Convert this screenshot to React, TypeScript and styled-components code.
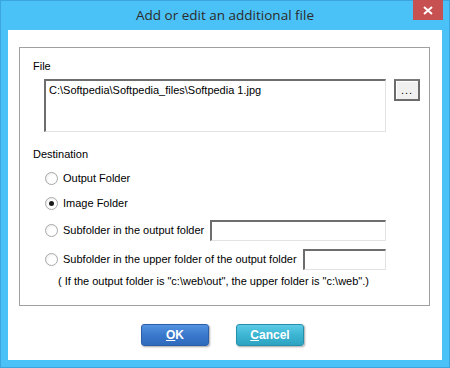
import React from "react";
import styled, { createGlobalStyle } from "styled-components";

const GlobalStyle = createGlobalStyle`
  html, body {
    margin: 0;
    padding: 0;
    background: #4bc2f7;
  }
  body {
    font-family: "Liberation Sans", Arial, sans-serif;
    font-size: 11px;
    color: #000;
  }
`;

const Window = styled.div`
  width: 450px;
  height: 368px;
  box-sizing: border-box;
  background: #4bc2f7;
  border: 1px solid #3aa6dd;
  display: flex;
  flex-direction: column;
`;

const TitleBar = styled.div`
  height: 29px;
  position: relative;
  display: flex;
  align-items: center;
  justify-content: center;
  padding-bottom: 1px;
  box-sizing: border-box;
  font-family: "Open Sans", "Liberation Sans", sans-serif;
  font-size: 13.5px;
  color: #2b2b2b;
`;

const CloseButton = styled.div`
  position: absolute;
  top: -1px;
  right: 6px;
  width: 30px;
  height: 20px;
  background: #c75050;
  display: flex;
  align-items: center;
  justify-content: center;
`;

const Client = styled.div`
  flex: 1;
  margin: 0 7px 7px 7px;
  background: #fff;
  display: flex;
  flex-direction: column;
`;

const Panel = styled.div`
  margin: 17px 0 0 11px;
  width: 411px;
  height: 259px;
  box-sizing: border-box;
  border: 1px solid #a0a0a0;
  padding: 11px 0 0 13px;
  display: flex;
  flex-direction: column;
`;

const Label = styled.div<{ $top?: number }>`
  margin-top: ${(p) => p.$top ?? 0}px;
  height: 14px;
  line-height: 14px;
`;

const FileRow = styled.div`
  display: flex;
  align-items: flex-start;
  gap: 8px;
  margin: 6px 0 0 11px;
`;

const PathBox = styled.div`
  width: 342px;
  height: 53px;
  box-sizing: border-box;
  border-style: solid;
  border-width: 2px 1px 1px 2px;
  border-color: #6d6d6d #e3e3e3 #e3e3e3 #6d6d6d;
  padding: 2px 3px;
  line-height: 14px;
`;

const BrowseButton = styled.div`
  width: 26px;
  height: 22px;
  box-sizing: border-box;
  border: 2px solid #6b6b6b;
  border-top-color: #7a7a7a;
  background: #f0f0f0;
  box-shadow: inset 1px 1px 0 #fff;
  display: flex;
  align-items: center;
  justify-content: center;
  font-size: 11px;
  letter-spacing: 1px;
  color: #000;
`;

const RadioRow = styled.label<{ $top: number }>`
  display: flex;
  align-items: center;
  width: 341px;
  height: 20px;
  margin: ${(p) => p.$top}px 0 0 12px;
  gap: 5px;
`;

const Radio = styled.span<{ $checked?: boolean }>`
  width: 11px;
  height: 11px;
  border-radius: 50%;
  border: 1px solid #a8a8a8;
  background: radial-gradient(circle at 60% 60%, #ffffff 40%, #e4e4e4 100%);
  display: flex;
  align-items: center;
  justify-content: center;
  flex-shrink: 0;
  &::after {
    content: "";
    width: 5px;
    height: 5px;
    border-radius: 50%;
    background: ${(p) => (p.$checked ? "#1a1a1a" : "transparent")};
  }
`;

const TextInput = styled.div<{ $offset: number }>`
  flex: 1;
  height: 21px;
  box-sizing: border-box;
  border-style: solid;
  border-width: 2px 1px 1px 2px;
  border-color: #6d6d6d #e3e3e3 #e3e3e3 #6d6d6d;
  margin-left: ${(p) => p.$offset}px;
`;

const Note = styled.div`
  margin: 5px 0 0 25px;
  height: 14px;
  line-height: 14px;
`;

const ButtonBar = styled.div`
  display: flex;
  justify-content: center;
  gap: 27px;
  margin-top: 18px;
  padding-right: 5px;
`;

const DialogButton = styled.div<{ $tone: "blue" | "teal" }>`
  width: 68px;
  height: 22px;
  box-sizing: border-box;
  border-radius: 3px;
  border: 1px solid ${(p) => (p.$tone === "blue" ? "#2d5fa8" : "#2590aa")};
  background: ${(p) =>
    p.$tone === "blue"
      ? "linear-gradient(#5393e0, #3a78cc 50%, #2f6bbd)"
      : "linear-gradient(#5ccbe6, #3cb5d3 50%, #2ea3c2)"};
  box-shadow: 1px 1px 2px rgba(0, 0, 0, 0.35);
  color: #fff;
  font-weight: bold;
  font-size: 12px;
  display: flex;
  align-items: center;
  justify-content: center;
  u {
    text-decoration: underline;
  }
`;

export default function App() {
  return (
    <>
      <GlobalStyle />
      <Window>
        <TitleBar>
          Add or edit an additional file
          <CloseButton>
            <svg width="10" height="9" viewBox="0 0 10 9">
              <path d="M1 1 L9 8 M9 1 L1 8" stroke="#fff" strokeWidth="2" />
            </svg>
          </CloseButton>
        </TitleBar>
        <Client>
          <Panel>
            <Label>File</Label>
            <FileRow>
              <PathBox>C:\Softpedia\Softpedia_files\Softpedia 1.jpg</PathBox>
              <BrowseButton>...</BrowseButton>
            </FileRow>
            <Label $top={15}>Destination</Label>
            <RadioRow $top={7}>
              <Radio />
              Output Folder
            </RadioRow>
            <RadioRow $top={5}>
              <Radio $checked />
              Image Folder
            </RadioRow>
            <RadioRow $top={7}>
              <Radio />
              Subfolder in the output folder
              <TextInput $offset={1} />
            </RadioRow>
            <RadioRow $top={9}>
              <Radio />
              Subfolder in the upper folder of the output folder
              <TextInput $offset={1} />
            </RadioRow>
            <Note>( If the output folder is "c:\web\out", the upper folder is "c:\web".)</Note>
          </Panel>
          <ButtonBar>
            <DialogButton $tone="blue">
              <span>
                <u>O</u>K
              </span>
            </DialogButton>
            <DialogButton $tone="teal">
              <span>
                <u>C</u>ancel
              </span>
            </DialogButton>
          </ButtonBar>
        </Client>
      </Window>
    </>
  );
}
